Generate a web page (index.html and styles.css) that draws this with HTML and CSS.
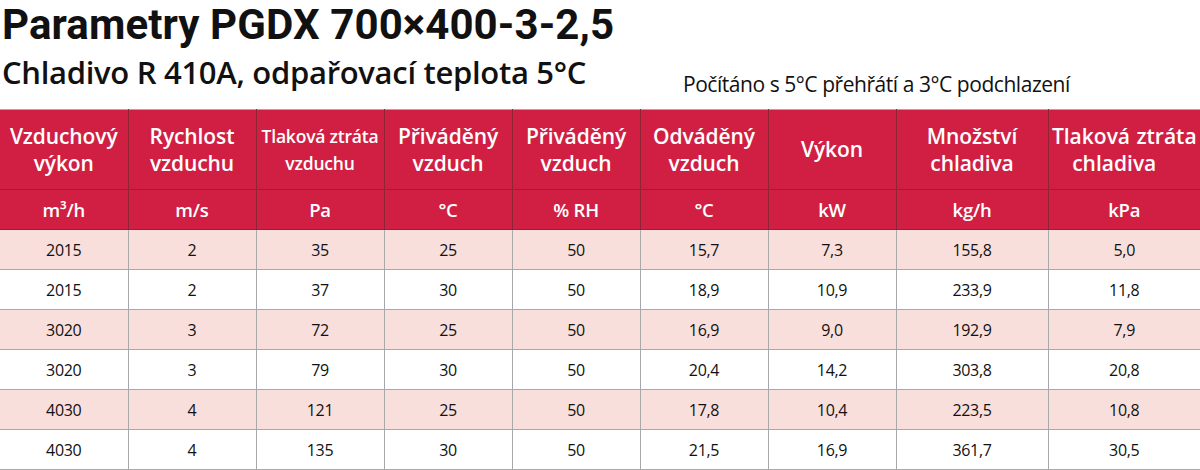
FILE: index.html
```html
<!DOCTYPE html>
<html lang="cs">
<head>
<meta charset="utf-8">
<title>Parametry PGDX 700×400-3-2,5</title>
<link rel="stylesheet" href="styles.css">
</head>
<body>
<header class="head">
  <h1 class="title">Parametry PGDX 700×400-3-2,5</h1>
  <div class="subline">
    <h2 class="subtitle">Chladivo R 410A, odpařovací teplota 5°C</h2>
    <p class="note">Počítáno s 5°C přehřátí a 3°C podchlazení</p>
  </div>
</header>
<table class="params">
  <colgroup>
    <col class="c128"><col class="c128"><col class="c128"><col class="c128"><col class="c128"><col class="c128"><col class="c128"><col class="c152"><col class="c152">
  </colgroup>
  <thead>
    <tr class="names">
      <th>Vzduchový<br>výkon</th>
      <th>Rychlost<br>vzduchu</th>
      <th class="small">Tlaková ztráta<br>vzduchu</th>
      <th>Přiváděný<br>vzduch</th>
      <th>Přiváděný<br>vzduch</th>
      <th>Odváděný<br>vzduch</th>
      <th>Výkon</th>
      <th>Množství<br>chladiva</th>
      <th class="wide">Tlaková ztráta<br><span class="shift">chladiva</span></th>
    </tr>
    <tr class="units">
      <th>m³/h</th><th>m/s</th><th>Pa</th><th>°C</th><th>% RH</th><th>°C</th><th>kW</th><th>kg/h</th><th>kPa</th>
    </tr>
  </thead>
  <tbody>
    <tr class="odd"><td>2015</td><td>2</td><td>35</td><td>25</td><td>50</td><td>15,7</td><td>7,3</td><td>155,8</td><td>5,0</td></tr>
    <tr><td>2015</td><td>2</td><td>37</td><td>30</td><td>50</td><td>18,9</td><td>10,9</td><td>233,9</td><td>11,8</td></tr>
    <tr class="odd"><td>3020</td><td>3</td><td>72</td><td>25</td><td>50</td><td>16,9</td><td>9,0</td><td>192,9</td><td>7,9</td></tr>
    <tr><td>3020</td><td>3</td><td>79</td><td>30</td><td>50</td><td>20,4</td><td>14,2</td><td>303,8</td><td>20,8</td></tr>
    <tr class="odd"><td>4030</td><td>4</td><td>121</td><td>25</td><td>50</td><td>17,8</td><td>10,4</td><td>223,5</td><td>10,8</td></tr>
    <tr><td>4030</td><td>4</td><td>135</td><td>30</td><td>50</td><td>21,5</td><td>16,9</td><td>361,7</td><td>30,5</td></tr>
  </tbody>
</table>
</body>
</html>
```
FILE: styles.css
```css
html, body {
  margin: 0;
  padding: 0;
  background: #fff;
}
body {
  width: 1200px;
  font-family: "Open Sans", "Noto Sans", sans-serif;
  color: #111;
}
.head {
  height: 109px;
  box-sizing: border-box;
  padding-left: 2px;
}
.title {
  margin: 0;
  font-family: Roboto, "Open Sans", sans-serif;
  font-size: 42px;
  line-height: normal;
  font-weight: 700;
  letter-spacing: 0.1px;
  color: #111;
}
.subline {
  display: flex;
  align-items: flex-end;
  margin-top: 3px;
}
.subtitle {
  margin: 0;
  width: 681px;
  flex: none;
  font-size: 31px;
  line-height: 40px;
  font-weight: 600;
  letter-spacing: -0.3px;
  color: #111;
}
.note {
  margin: 0 0 -4px 0;
  font-size: 21px;
  line-height: 24px;
  font-weight: 400;
  letter-spacing: -0.45px;
  color: #111;
}
.params {
  width: 1200px;
  table-layout: fixed;
  border-collapse: collapse;
}
.c128 { width: 128px; }
.c152 { width: 152px; }
.params th {
  background: #d11f43;
  color: #fff;
  font-weight: 600;
  border: 1px solid #8e2535;
  padding: 0;
  text-align: center;
  vertical-align: middle;
  white-space: nowrap;
}
.params thead tr:first-child th { border-top-color: #a8a8a8; }
.params th:first-child { border-left: none; }
.params th:last-child, .params td:last-child { border-right: none; }
.params td:first-child { border-left: none; }
.names th {
  height: 79px;
  font-size: 21px;
  line-height: 27px;
  letter-spacing: -0.1px;
}
.names th.small {
  font-size: 17.5px;
  letter-spacing: -0.2px;
}
.names th.wide {
  letter-spacing: 0;
  word-spacing: 1px;
}
.names th.wide .shift {
  margin-right: 20px;
}
.units th {
  height: 39px;
  font-size: 18.5px;
  letter-spacing: -0.2px;
}
.params td {
  height: 39px;
  padding: 0;
  text-align: center;
  vertical-align: middle;
  font-size: 16px;
  color: #111;
  border: 1px solid #a9a9a9;
  letter-spacing: -0.3px;
}
.params tr.odd td {
  background: #f9dfdc;
}
```
